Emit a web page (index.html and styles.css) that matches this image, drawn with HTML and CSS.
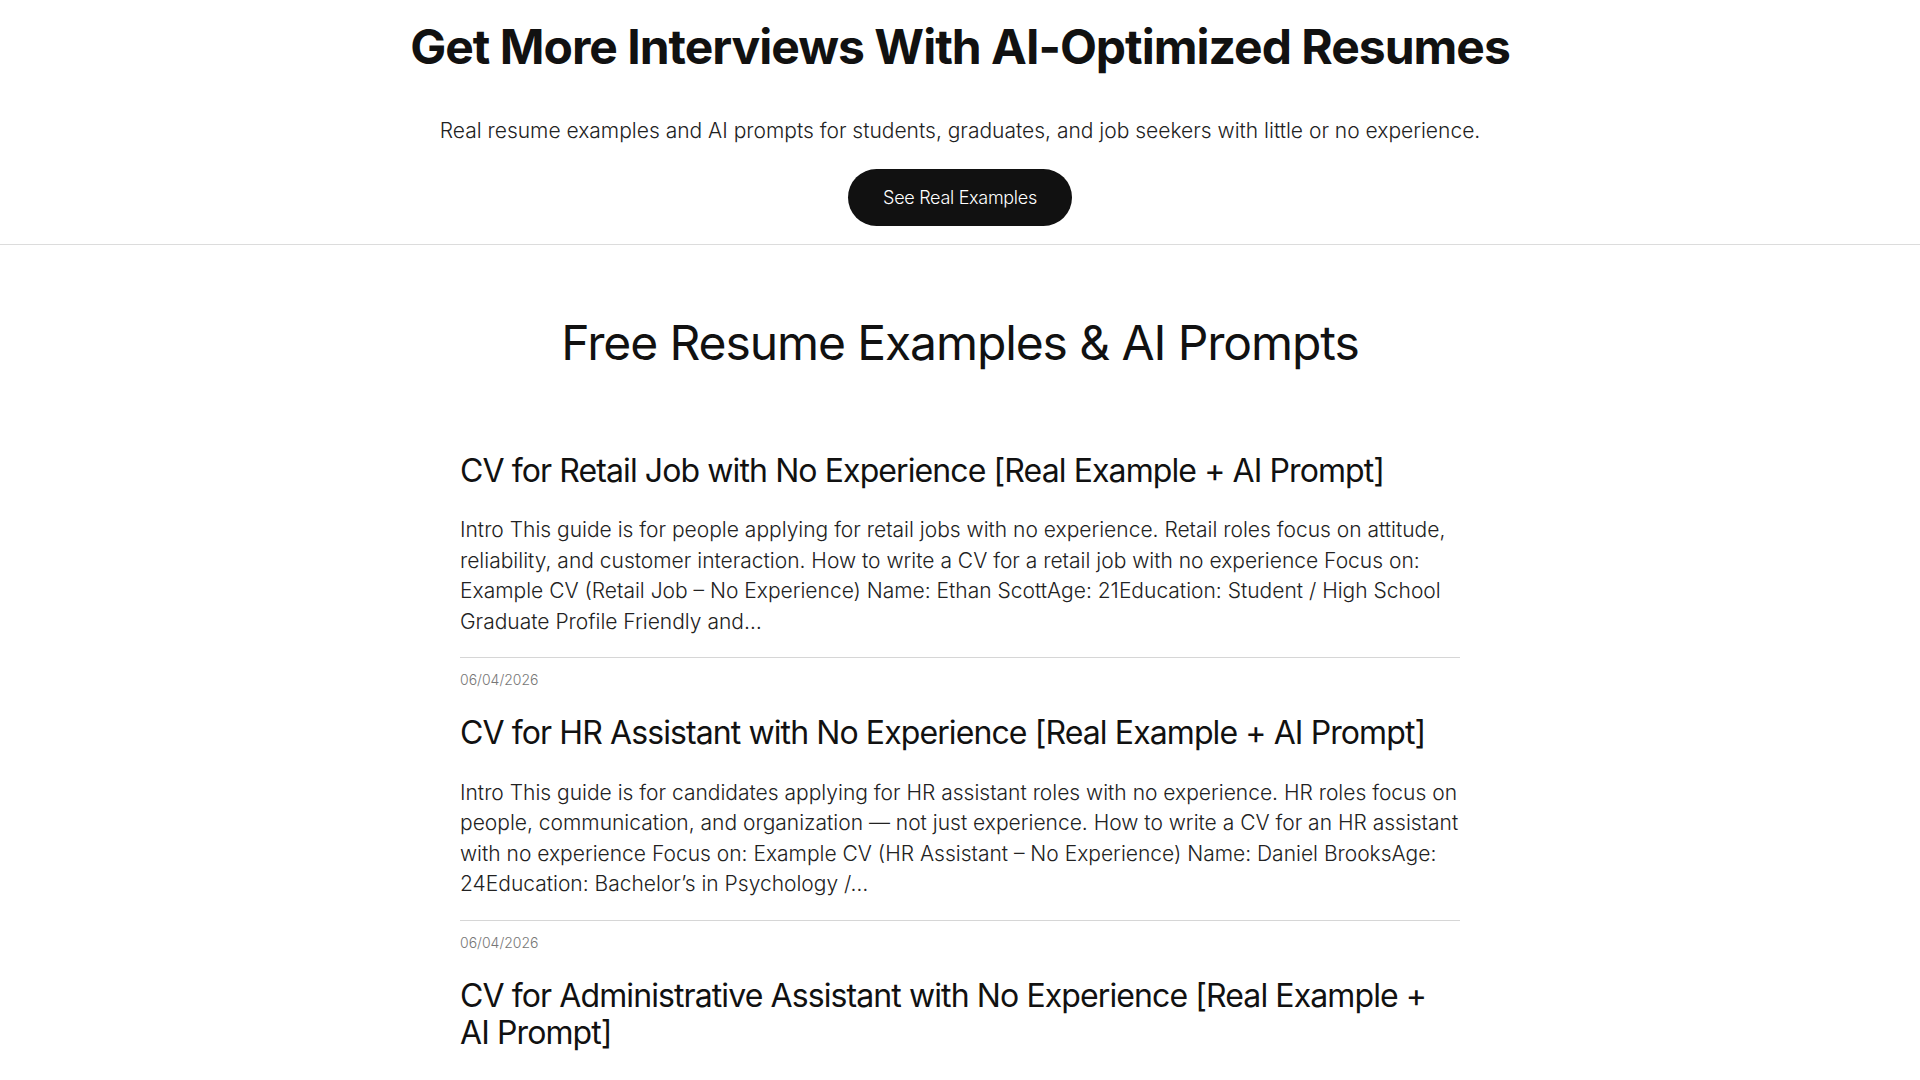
FILE: index.html
```html
<!DOCTYPE html>
<html lang="en">
<head>
<meta charset="utf-8">
<title>AI-Optimized Resumes</title>
<link rel="stylesheet" href="styles.css">
</head>
<body>
<header class="hero">
  <h1 class="hero-title">Get More Interviews With AI-Optimized Resumes</h1>
  <p class="hero-sub">Real resume examples and AI prompts for students, graduates, and job seekers with little or no experience.</p>
  <a class="hero-btn" href="#examples">See Real Examples</a>
</header>
<main class="main" id="examples">
  <h2 class="section-title">Free Resume Examples &amp; AI Prompts</h2>
  <div class="posts">
    <article class="post">
      <h3 class="post-title">CV for Retail Job with No Experience [Real Example + AI Prompt]</h3>
      <p class="post-excerpt">Intro This guide is for people applying for retail jobs with no experience. Retail roles focus on attitude, reliability, and customer interaction. How to write a CV for a retail job with no experience Focus on: Example CV (Retail Job – No Experience) Name: Ethan ScottAge: 21Education: Student / High School Graduate Profile Friendly and…</p>
      <div class="post-meta">06/04/2026</div>
    </article>
    <article class="post">
      <h3 class="post-title">CV for HR Assistant with No Experience [Real Example + AI Prompt]</h3>
      <p class="post-excerpt">Intro This guide is for candidates applying for HR assistant roles with no experience. HR roles focus on people, communication, and organization — not just experience. How to write a CV for an HR assistant with no experience Focus on: Example CV (HR Assistant – No Experience) Name: Daniel BrooksAge: 24Education: Bachelor’s in Psychology /…</p>
      <div class="post-meta">06/04/2026</div>
    </article>
    <article class="post">
      <h3 class="post-title">CV for Administrative Assistant with No Experience [Real Example + AI Prompt]</h3>
      <p class="post-excerpt">Intro This guide is for people applying for administrative assistant roles with no experience. Admin roles focus on organization, communication, and attention to detail. How to write a CV for an administrative assistant with no experience Focus on: Example CV (Administrative Assistant – No Experience)…</p>
      <div class="post-meta">06/04/2026</div>
    </article>
  </div>
</main>
</body>
</html>
```

FILE: styles.css
```css
* { box-sizing: border-box; }
html, body { margin: 0; padding: 0; background: #fff; }
body {
  font-family: Inter, "Noto Sans", "Liberation Sans", sans-serif;
  color: #111;
}
.hero {
  display: flex;
  flex-direction: column;
  align-items: center;
  padding: 18px 20px 18px;
  border-bottom: 1px solid #dcdcdc;
  text-align: center;
}
.hero-title {
  margin: 0;
  font-size: 48px;
  line-height: 1.2;
  font-weight: 700;
  letter-spacing: -1px;
  color: #111;
}
.hero-sub {
  margin: 39px 0 0;
  font-size: 21px;
  line-height: 1.5;
  font-weight: 300;
  color: #222;
}
.hero-btn {
  margin-top: 23px;
  display: inline-flex;
  align-items: center;
  justify-content: center;
  height: 57px;
  padding: 0 35px;
  border-radius: 29px;
  background: #111;
  color: #fff;
  font-size: 18px;
  font-weight: 300;
  letter-spacing: -0.3px;
  text-decoration: none;
}
.main {
  max-width: 1000px;
  margin: 0 auto;
  padding: 69px 0 40px;
}
.section-title {
  margin: 0;
  text-align: center;
  font-size: 48px;
  line-height: 1.2;
  font-weight: 400;
  letter-spacing: -1.1px;
  color: #111;
}
.posts {
  margin-top: 81px;
  display: flex;
  flex-direction: column;
  gap: 25px;
}
.post-title {
  margin: 0;
  font-size: 32px;
  line-height: 1.15;
  font-weight: 400;
  letter-spacing: -0.9px;
  color: #111;
}
.post-excerpt {
  margin: 26px 0 0;
  padding-bottom: 20px;
  border-bottom: 1px solid #d6d6d6;
  font-size: 21px;
  line-height: 1.45;
  font-weight: 300;
  color: #222;
}
.post-meta {
  padding-top: 11px;
  font-size: 14px;
  line-height: 1.5;
  font-weight: 300;
  color: #777;
}
```
